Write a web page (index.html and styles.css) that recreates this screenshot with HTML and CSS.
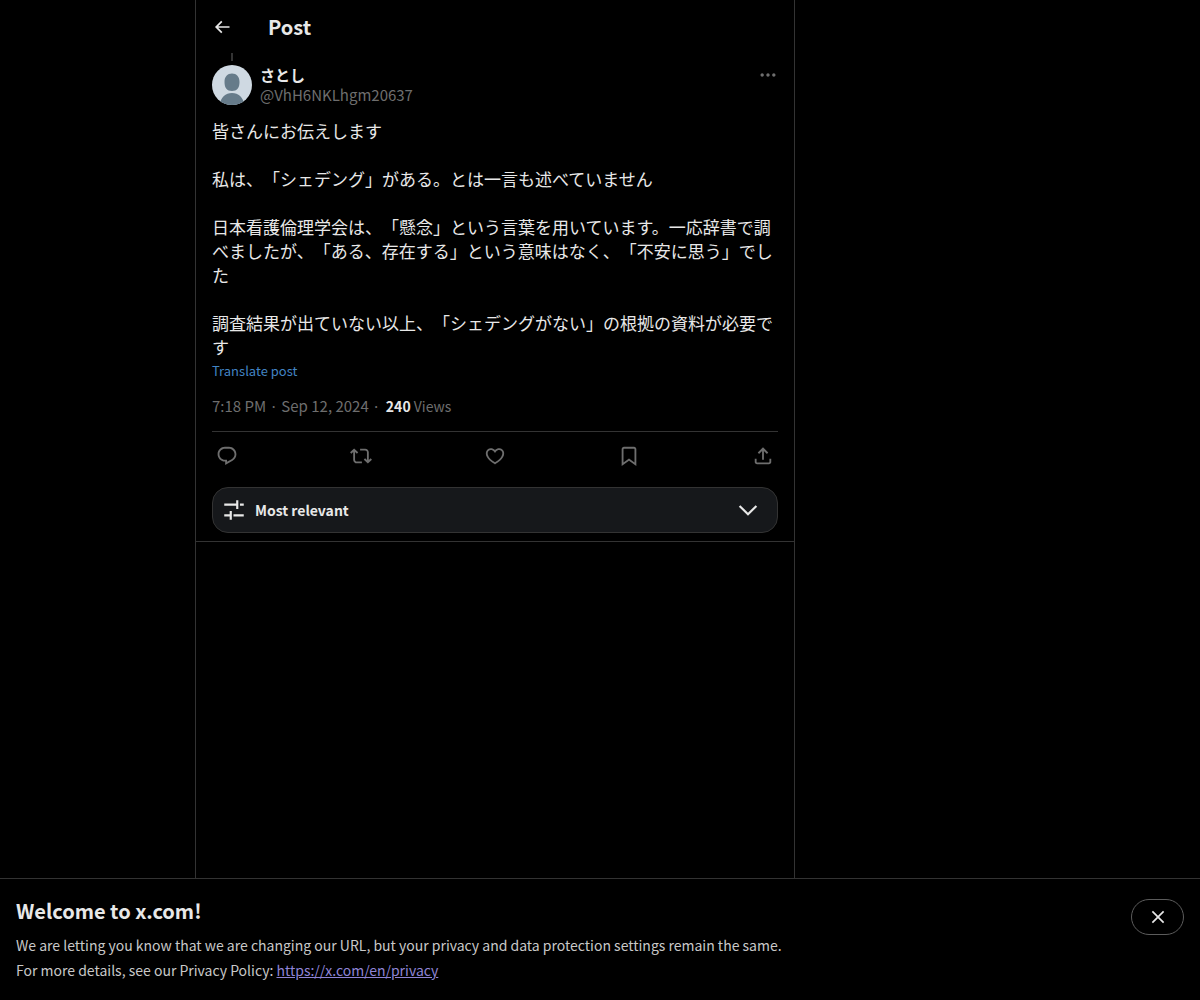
FILE: index.html
```html
<!DOCTYPE html>
<html lang="ja">
<head>
    <meta charset="UTF-8">
    <meta name="viewport" content="width=device-width, initial-scale=1.0">
    <title>Post</title>
    <link rel="stylesheet" href="styles.css">
</head>
<body>

    <main class="column">
        <!-- Top bar -->
        <header class="top-bar">
            <button class="icon-btn back-btn" aria-label="Back">
                <svg class="icon-small" viewBox="0 0 24 24"><path d="M7.414 13l5.043 5.04-1.414 1.42L3.586 12l7.457-7.46 1.414 1.42L7.414 11H21v2H7.414z"/></svg>
            </button>
            <h1>Post</h1>
        </header>

        <article class="post">
            <div class="thread-line"></div>

            <!-- Author -->
            <div class="author">
                <svg class="avatar" viewBox="0 0 40 40" role="img" aria-label="さとし">
                    <clipPath id="circle"><circle cx="20" cy="20" r="20"/></clipPath>
                    <g clip-path="url(#circle)">
                        <rect width="40" height="40" fill="#cfd9e2"/>
                        <path fill="#667b8a" d="M20 8.500c4.500 0 7.500 3 7.500 8.500 0 6-2.500 9-7.500 9s-7.500-3-7.500-9c0-5.500 3-8.500 7.500-8.500zM7.500 40C9 32 13.500 28 20 28s11 4 12.500 12z"/>
                    </g>
                </svg>
                <div class="names">
                    <a class="name" href="#">さとし</a>
                    <a class="handle" href="#">@VhH6NKLhgm20637</a>
                </div>
                <button class="icon-btn more-btn" aria-label="More">
                    <svg class="icon-small" viewBox="0 0 24 24"><path d="M3 12c0-1.100.9-2 2-2s2 .9 2 2-.9 2-2 2-2-.9-2-2zm9 2c1.100 0 2-.9 2-2s-.9-2-2-2-2 .9-2 2 .9 2 2 2zm7 0c1.100 0 2-.9 2-2s-.9-2-2-2-2 .9-2 2 .9 2 2 2z"/></svg>
                </button>
            </div>

            <!-- Text -->
            <div class="post-text">
                <p>皆さんにお伝えします</p>
                <p>私は、「シェデング」がある。とは一言も述べていません</p>
                <p>日本看護倫理学会は、「懸念」という言葉を用いています。一応辞書で調べましたが、「ある、存在する」という意味はなく、「不安に思う」でした</p>
                <p>調査結果が出ていない以上、「シェデングがない」の根拠の資料が必要です</p>
            </div>
            <button class="translate">Translate post</button>

            <div class="meta"><a href="#">7:18 PM · Sep 12, 2024</a> · <span class="views"><strong>240</strong> Views</span></div>

            <!-- Actions -->
            <div class="actions">
                <button class="icon-btn" aria-label="Reply">
                    <svg class="icon" viewBox="0 0 24 24"><path d="M1.751 10c0-4.420 3.584-8 8.005-8h4.366c4.490 0 8.129 3.640 8.129 8.130 0 2.960-1.607 5.680-4.196 7.110l-8.054 4.460v-3.690h-.067c-4.490.1-8.183-3.510-8.183-8.010zm8.005-6c-3.317 0-6.005 2.690-6.005 6 0 3.370 2.770 6.080 6.138 6.010l.351-.01h1.761v2.300l5.087-2.810c1.951-1.080 3.163-3.130 3.163-5.360 0-3.390-2.744-6.130-6.129-6.130H9.756z"/></svg>
                </button>
                <button class="icon-btn" aria-label="Repost">
                    <svg class="icon" viewBox="0 0 24 24"><path d="M4.500 3.880l4.432 4.140-1.364 1.460L5.500 7.550V16c0 1.100.896 2 2 2H13v2H7.500c-2.209 0-4-1.790-4-4V7.550L1.432 9.480.068 8.020 4.500 3.880zM16.500 6H11V4h5.500c2.209 0 4 1.790 4 4v8.450l2.068-1.930 1.364 1.460-4.432 4.140-4.432-4.140 1.364-1.460 2.068 1.930V8c0-1.100-.896-2-2-2z"/></svg>
                </button>
                <button class="icon-btn" aria-label="Like">
                    <svg class="icon" viewBox="0 0 24 24"><path d="M16.697 5.500c-1.222-.06-2.679.51-3.890 2.160l-.805 1.090-.806-1.090C9.984 6.010 8.526 5.440 7.304 5.500c-1.243.07-2.349.78-2.910 1.910-.552 1.120-.633 2.780.479 4.820 1.074 1.970 3.257 4.270 7.129 6.610 3.870-2.340 6.052-4.640 7.126-6.610 1.111-2.040 1.030-3.700.477-4.820-.561-1.130-1.666-1.840-2.908-1.910zm4.187 7.690c-1.351 2.480-4.001 5.120-8.379 7.670l-.503.3-.504-.3c-4.379-2.550-7.029-5.190-8.382-7.670-1.360-2.500-1.410-4.860-.514-6.670.887-1.790 2.647-2.910 4.601-3.010 1.651-.09 3.368.56 4.798 2.010 1.429-1.450 3.146-2.100 4.796-2.010 1.954.1 3.714 1.220 4.601 3.010.896 1.810.846 4.170-.514 6.670z"/></svg>
                </button>
                <button class="icon-btn" aria-label="Bookmark">
                    <svg class="icon" viewBox="0 0 24 24"><path d="M4 4.500C4 3.120 5.119 2 6.500 2h11C18.881 2 20 3.120 20 4.500v18.440l-8-5.710-8 5.710V4.500zM6.500 4c-.276 0-.5.22-.5.5v14.560l6-4.290 6 4.290V4.500c0-.28-.224-.5-.5-.5h-11z"/></svg>
                </button>
                <button class="icon-btn" aria-label="Share post">
                    <svg class="icon" viewBox="0 0 24 24"><path d="M12 2.590l5.700 5.700-1.410 1.420L13 6.410V16h-2V6.410l-3.300 3.300-1.410-1.420L12 2.590zM21 15l-.02 3.510c0 1.380-1.120 2.490-2.500 2.490H5.500C4.110 21 3 19.880 3 18.500V15h2v3.500c0 .28.22.5.5.5h12.980c.28 0 .5-.22.5-.5L19 15h2z"/></svg>
                </button>
            </div>

            <!-- Reply sorting -->
            <button class="sort-btn">
                <svg class="icon-large" viewBox="0 0 24 24"><path d="M14 6V3h2v8h-2V8H3V6h11zm7 2h-3.500V6H21v2zM8 16v-3h2v8H8v-3H3v-2h5zm13 2h-9.500v-2H21v2z"/></svg>
                <span>Most relevant</span>
                <svg class="icon-large" viewBox="0 0 24 24"><path d="M3.543 8.960l1.414-1.420L12 14.590l7.043-7.050 1.414 1.420L12 17.410 3.543 8.960z"/></svg>
            </button>
        </article>
    </main>

    <!-- URL change notice -->
    <section class="notice">
        <div>
            <h2>Welcome to x.com!</h2>
            <p>We are letting you know that we are changing our URL, but your privacy and data protection settings remain the same.</p>
            <p>For more details, see our Privacy Policy: <a href="https://x.com/en/privacy">https://x.com/en/privacy</a></p>
        </div>
        <button class="close-btn" aria-label="Close">
            <svg class="icon-close" viewBox="0 0 24 24"><path d="M10.590 12L4.540 5.960l1.420-1.420L12 10.590l6.040-6.050 1.420 1.420L13.410 12l6.050 6.040-1.420 1.420L12 13.410l-6.040 6.050-1.420-1.420L10.590 12z"/></svg>
        </button>
    </section>

</body>
</html>
```
FILE: styles.css
```css
* {
    box-sizing: border-box;
}

body {
    font-family: "Noto Sans CJK JP", sans-serif;
    font-size: 15px;
    line-height: 20px;
    background: #000;
    color: #e8e8e8;
    margin: 0;
    padding-right: 210px;
}

h1, h2, p {
    margin: 0;
}

a {
    color: inherit;
    text-decoration: none;
}

button {
    font: inherit;
    color: inherit;
    background: none;
    border: none;
    padding: 0;
    cursor: pointer;
}

svg {
    display: block;
    fill: currentColor;
    flex-shrink: 0;
}

.icon-small {
    width: 20px;
    height: 20px;
}

.icon {
    width: 22px;
    height: 22px;
}

.icon-large {
    width: 26px;
    height: 26px;
}

.icon-close {
    width: 20px;
    height: 20px;
}

.column {
    max-width: 600px;
    min-height: 100vh;
    margin: 0 auto;
    border-left: 1px solid #333;
    border-right: 1px solid #333;
}

.top-bar {
    display: flex;
    align-items: center;
    gap: 36px;
    height: 53px;
    padding: 0 16px;
}

h1, h2 {
    font-size: 20px;
    line-height: 24px;
    font-weight: bold;
}

.post {
    padding: 0 16px 8px;
    border-bottom: 1px solid #333;
}

.thread-line {
    width: 2px;
    height: 8px;
    margin: 0 19px 4px;
    background: #333;
}

.author {
    display: flex;
    align-items: flex-start;
    gap: 8px;
}

.avatar {
    width: 40px;
    height: 40px;
}

.names {
    display: flex;
    flex-direction: column;
    flex: 1;
}

.name {
    font-weight: bold;
}

.handle, .meta, .actions, .more-btn {
    color: #6e6e6e;
}

.post-text {
    margin-top: 14px;
    font-size: 17px;
    line-height: 24px;
    text-spacing-trim: space-all;
}

.post-text p + p {
    margin-top: 24px;
}

.translate {
    display: block;
    margin-top: 2px;
    font-size: 13px;
    line-height: 20px;
    color: #4284c4;
}

.meta {
    padding: 15px 0;
}

.views {
    padding-left: 2px;
    font-size: 14px;
}

.meta strong {
    color: #e8e8e8;
}

.actions {
    display: flex;
    justify-content: space-between;
    align-items: center;
    height: 48px;
    padding: 0 4px;
    border-top: 1px solid #333;
}

.sort-btn {
    display: flex;
    align-items: center;
    gap: 8px;
    width: 100%;
    height: 46px;
    margin-top: 8px;
    padding: 0 16px 0 8px;
    background: #16181b;
    border: 1px solid #333;
    border-radius: 16px;
    font-size: 14px;
    font-weight: bold;
}

.sort-btn span {
    flex: 1;
    text-align: left;
}

/* Stays at the bottom of the window */
.notice {
    position: fixed;
    left: 0;
    right: 0;
    bottom: 0;
    display: flex;
    justify-content: space-between;
    align-items: flex-start;
    gap: 16px;
    padding: 20px 16px 17px;
    background: #000;
    border-top: 1px solid #333;
}

.notice h2 {
    margin-bottom: 10px;
}

.notice p {
    font-size: 14px;
    line-height: 25px;
    color: #c8c8c8;
}

.notice p a {
    color: #8f84d6;
    text-decoration: underline;
}

.close-btn {
    display: flex;
    align-items: center;
    justify-content: center;
    width: 53px;
    height: 36px;
    flex-shrink: 0;
    border: 1px solid #5c5c5c;
    border-radius: 18px;
}
```
